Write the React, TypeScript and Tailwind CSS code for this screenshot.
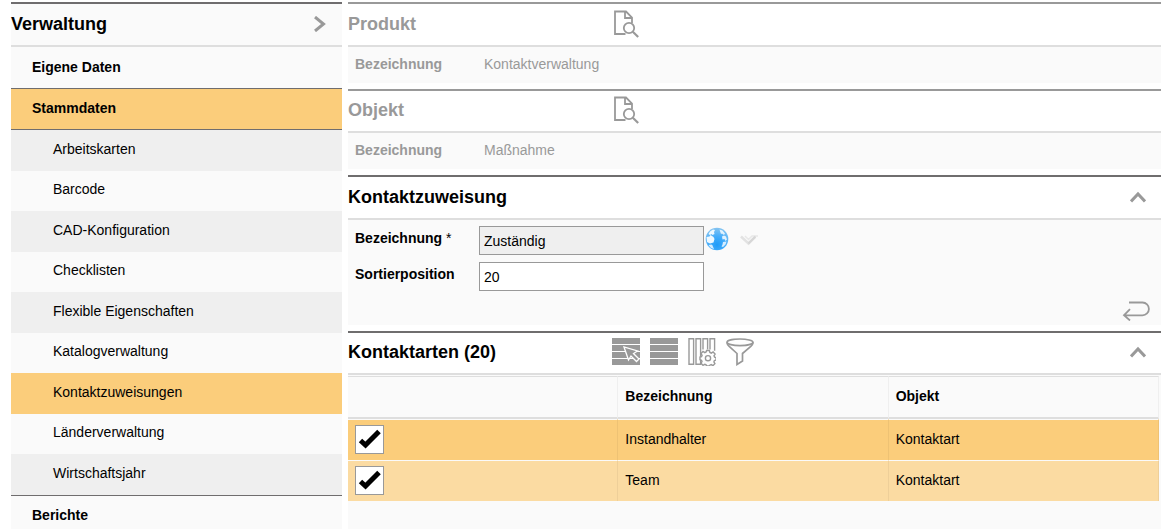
import { useState } from 'react';
import type { ReactNode } from 'react';
import clsx from 'clsx';

const MASTER_DATA = [
  'Arbeitskarten',
  'Barcode',
  'CAD-Konfiguration',
  'Checklisten',
  'Flexible Eigenschaften',
  'Katalogverwaltung',
  'Kontaktzuweisungen',
  'Länderverwaltung',
  'Wirtschaftsjahr',
];

const CONTACT_TYPES = [
  { id: 1, name: 'Instandhalter', object: 'Kontaktart' },
  { id: 2, name: 'Team', object: 'Kontaktart' },
];

function DocumentSearchIcon() {
  return (
    <svg className="size-7" viewBox="0 0 28 28" fill="none" stroke="#999" strokeWidth="1.8">
      <path d="M13.5 24H3V1.5h11l6 6V13M13 1.8V8h6.5" />
      <circle cx="17" cy="18" r="5.2" />
      <path d="M20.8 21.8l5.4 5.2" strokeWidth="2.2" />
    </svg>
  );
}

function SelectRowsIcon() {
  return (
    <svg className="size-7" viewBox="0 0 28 28" fill="#999">
      <path d="M0 0h28v6H0zM0 7h28v6H0zM0 14h28v6H0zM0 21h28v6H0z" />
      <path d="M12 9l4.5 13 2.5-4 5.5 5.5 2.5-2.5-5.5-5.5 4-2.5z" stroke="#fff" strokeWidth="1.3" />
    </svg>
  );
}

function RowsIcon() {
  return (
    <svg className="size-7" viewBox="0 0 28 28" fill="#999">
      <path d="M0 0h28v6H0zM0 7h28v6H0zM0 14h28v6H0zM0 21h28v6H0z" />
    </svg>
  );
}

function ColumnSettingsIcon() {
  return (
    <svg className="size-7" viewBox="0 0 28 28" fill="none" stroke="#999" strokeWidth="1.4">
      <path d="M1 .7h4.6v25.6H1zM8 .7h4.6v25.6H8zM15 11.5V.7h4.6v10.8M22 11.5V.7h4.6v12" />
      <path
        d="M18.6 12.5h2.8l.5 2 1.4.6 1.8-1.1 2 2-1.1 1.8.6 1.4 1.4.3v2.6l-1.6.5-.5 1.3 1 1.8-2 2-1.7-1.1-1.4.6-.4.8h-2.8l-.5-1.1-1.3-.6-1.8 1-2-2 1-1.8-.5-1.3-1.5-.5v-2.6l1.5-.4.6-1.4-1.1-1.8 2-2 1.8 1.1 1.3-.6z"
        fill="#fff"
      />
      <circle cx="20" cy="20.2" r="2.6" />
    </svg>
  );
}

function FilterIcon() {
  return (
    <svg className="size-7" viewBox="0 0 28 28" fill="none" stroke="#999" strokeWidth="1.7">
      <ellipse cx="14" cy="4.3" rx="13" ry="3.3" />
      <path d="M1 4.5c0 1.5 1 2.7 2.2 3.8L11 15.5v11l5.5-3.5v-7.5l8.3-7.2C26 7.2 27 6 27 4.5" />
    </svg>
  );
}

function ChevronUpIcon() {
  return (
    <svg className="h-3 w-4" viewBox="0 0 16 12" fill="none" stroke="#999" strokeWidth="3">
      <path d="M1 10.5L8 3l7 7.5" />
    </svg>
  );
}

function GlobeIcon() {
  return (
    <svg className="size-6" viewBox="0 0 24 24">
      <defs>
        <radialGradient id="globe" cx="50%" cy="75%" r="75%">
          <stop offset="0" stopColor="#1e9bf8" />
          <stop offset="0.5" stopColor="#45adfb" />
          <stop offset="1" stopColor="#86c4f0" />
        </radialGradient>
      </defs>
      <circle cx="12" cy="12" r="11.3" fill="url(#globe)" />
      <g fill="#eef8ff">
        <path d="M5 4.5l3-2 2 .5-1 2 .5 2-2 1-1-1L5 8 3.500 7z" />
        <path d="M1.500 10l3-.5 1-1.500 3 2 1 2-1 3.500-3.500 1L2 15z" />
        <path d="M3.500 18l3-.5 1 1 1.500 3.500-3-1z" opacity=".85" />
        <path d="M14.500 2.500l3 1 2.500 3-1 1.500-2-1.500-1 .5z" opacity=".9" />
        <path d="M17 9.500l2-1 2 1 1 3-1.500 1.500-1-2-2 .5z" opacity=".9" />
        <path d="M18 15l3.500-.5-1 3-2.500 2.500-1.500-.5 1-2z" opacity=".85" />
      </g>
    </svg>
  );
}

function DoubleCheckIcon() {
  return (
    <svg className="h-3 w-5" viewBox="0 0 20 12" fill="none">
      <path d="M2 2.500l7.500 7L16 3" stroke="#e2e2e2" strokeWidth="2.500" />
      <path d="M6 2l3.500 3.500L13 2h6" stroke="#e8e8e8" strokeWidth="1.500" />
      <path d="M9.500 9.500l7-7" stroke="#d6d6d6" strokeWidth="2" />
    </svg>
  );
}

function ReturnIcon() {
  return (
    <svg className="h-5 w-7" viewBox="0 0 28 20" fill="none" stroke="#999" strokeWidth="1.8">
      <path d="M7 1.500h13.500a6.300 6.300 0 0 1 0 12.800H2M8 8.200l-6 6.100 6 5.200" />
    </svg>
  );
}

type PanelProps = {
  title: string;
  muted?: boolean;
  tools?: ReactNode;
  open?: boolean;
  onToggle?: () => void;
  children: ReactNode;
};

function Panel({ title, muted, tools, open = true, onToggle, children }: PanelProps) {
  return (
    <section
      className={clsx(
        'group border-t-2 last:flex-1 last:bg-[#fafafa]',
        muted ? 'border-[#999] text-[#999]' : 'border-[#6f6d6e] text-black'
      )}
    >
      <header className="flex h-[43px] items-center border-b-2 border-[#dedede] bg-white pb-[2px] group-even:h-[42px]">
        <h2 className="w-66 text-lg/5 font-bold">{title}</h2>
        <div className="flex flex-1 gap-[10px]">{tools}</div>
        {onToggle && (
          <button type="button" aria-label={title} aria-expanded={open} onClick={onToggle} className="mr-[15px]">
            <ChevronUpIcon />
          </button>
        )}
      </header>
      {open && children}
    </section>
  );
}

function ReadOnlyPanel({ title, value }: { title: string; value: string }) {
  return (
    <Panel
      title={title}
      muted
      tools={
        <button type="button" aria-label={`${title} suchen`}>
          <DocumentSearchIcon />
        </button>
      }
    >
      <dl className="flex h-9 items-center bg-[#fafafa] pb-[2px] pl-[7px]">
        <dt className="w-[129px] font-bold">Bezeichnung</dt>
        <dd>{value}</dd>
      </dl>
    </Panel>
  );
}

function Sidebar() {
  const [active, setActive] = useState('Kontaktzuweisungen');

  return (
    <nav className="w-[331px] shrink-0 border-t-2 border-[#6f6d6e] bg-[#fafafa]">
      <div className="flex h-[43px] items-center justify-between border-b-2 border-[#dedede] pr-4 pb-[2px]">
        <h2 className="text-lg/5 font-bold">Verwaltung</h2>
        <button type="button" aria-label="Menü einklappen">
          <svg className="h-4 w-3" viewBox="0 0 12 16" fill="none" stroke="#999" strokeWidth="3">
            <path d="M1 1l8.500 7L1 15" />
          </svg>
        </button>
      </div>
      <a href="#eigene-daten" className="flex h-[41px] items-center pb-[2px] pl-[21px] font-bold">
        Eigene Daten
      </a>
      <a
        href="#stammdaten"
        className="flex h-[42px] items-center border-y border-[#6f6d6e] bg-[#fbcd7b] pb-[2px] pl-[21px] font-bold"
      >
        Stammdaten
      </a>
      <ul>
        {MASTER_DATA.map((item) => (
          <li key={item} className="odd:h-[41px] odd:bg-[#efefef] even:h-10">
            <a
              href="#stammdaten"
              onClick={() => setActive(item)}
              className={clsx('flex h-full items-center pb-1 pl-[42px]', item === active && 'bg-[#fbcd7b]')}
            >
              {item}
            </a>
          </li>
        ))}
      </ul>
      <a href="#berichte" className="flex h-[41px] items-center border-t border-[#6f6d6e] pb-[2px] pl-[21px] font-bold">
        Berichte
      </a>
    </nav>
  );
}

function AssignmentForm() {
  return (
    <form className="flex h-[105px] justify-between bg-[#fafafa] pl-[7px]" onSubmit={(e) => e.preventDefault()}>
      <div className="flex flex-col gap-[7px] pt-[6px]">
        <div className="flex items-start">
          <label htmlFor="name" className="w-[124px] pt-[2px] font-bold">
            Bezeichnung <span className="font-normal">*</span>
          </label>
          <input
            id="name"
            readOnly
            defaultValue="Zuständig"
            className="h-[29px] w-[225px] border border-[#999] bg-[#efefef] px-1 outline-none"
          />
          <button type="button" aria-label="Übersetzen" className="ml-px pt-px">
            <GlobeIcon />
          </button>
          <button type="button" aria-label="Übernehmen" className="ml-[10px] pt-2" disabled>
            <DoubleCheckIcon />
          </button>
        </div>
        <div className="flex items-start">
          <label htmlFor="position" className="w-[124px] pt-[2px] font-bold">
            Sortierposition
          </label>
          <input
            id="position"
            defaultValue="20"
            className="h-[29px] w-[225px] border border-[#999] bg-white px-1 outline-none"
          />
        </div>
      </div>
      <button type="submit" aria-label="Zurück" className="mr-[11px] self-end pb-1">
        <ReturnIcon />
      </button>
    </form>
  );
}

function ContactTypeTable() {
  const [selected, setSelected] = useState<number[]>([1, 2]);

  const toggle = (id: number) =>
    setSelected((prev) => (prev.includes(id) ? prev.filter((x) => x !== id) : [...prev, id]));

  return (
    <div className="pt-px pr-[2px]">
      <table className="w-full table-fixed border-separate border-spacing-0 text-left">
        <thead>
          <tr className="h-[43px]">
            <th className="border-t border-r border-b-2 border-[#dedede] border-r-[#efefef]" />
            <th className="border-t border-r border-b-2 border-[#dedede] border-r-[#efefef] px-[7px] pb-[2px]">
              Bezeichnung
            </th>
            <th className="border-t border-r border-b-2 border-[#dedede] border-r-[#efefef] px-[7px] pb-[2px]">
              Objekt
            </th>
          </tr>
        </thead>
        <tbody>
          {CONTACT_TYPES.map((row) => (
            <tr key={row.id} className="h-[41px] odd:bg-[#fbcd7b] even:bg-[#fbdba2]">
              <td className="border-t border-r border-t-[#fafafa] border-r-black/5 pb-[2px] pl-[7px]">
                <label className="grid size-[29px] place-items-center">
                  <input
                    type="checkbox"
                    aria-label={row.name}
                    checked={selected.includes(row.id)}
                    onChange={() => toggle(row.id)}
                    className="peer col-start-1 row-start-1 size-[29px] appearance-none border border-[#999] bg-white"
                  />
                  <svg
                    className="pointer-events-none invisible col-start-1 row-start-1 h-5 w-[23px] peer-checked:visible"
                    viewBox="0 0 23 20"
                    fill="none"
                    stroke="#000"
                    strokeWidth="5"
                  >
                    <path d="M2.500 11.500l5 4.500L21 2.500" />
                  </svg>
                </label>
              </td>
              <td className="border-t border-r border-t-[#fafafa] border-r-black/5 px-[7px] pb-[2px]">{row.name}</td>
              <td className="border-t border-r border-t-[#fafafa] border-r-black/5 px-[7px] pb-[2px]">{row.object}</td>
            </tr>
          ))}
        </tbody>
      </table>
    </div>
  );
}

export default function App() {
  const [formOpen, setFormOpen] = useState(true);
  const [tableOpen, setTableOpen] = useState(true);

  return (
    <div className="flex h-screen gap-[6px] overflow-hidden bg-white pt-[2px] pr-[9px] pl-[11px] font-['Liberation_Sans',Arial,sans-serif] text-sm text-black">
      <Sidebar />
      <main className="flex min-w-0 flex-1 flex-col gap-[6px]">
        <ReadOnlyPanel title="Produkt" value="Kontaktverwaltung" />
        <ReadOnlyPanel title="Objekt" value="Maßnahme" />
        <Panel title="Kontaktzuweisung" open={formOpen} onToggle={() => setFormOpen(!formOpen)}>
          <AssignmentForm />
        </Panel>
        <Panel
          title="Kontaktarten (20)"
          open={tableOpen}
          onToggle={() => setTableOpen(!tableOpen)}
          tools={
            <>
              <button type="button" aria-label="Auswahl">
                <SelectRowsIcon />
              </button>
              <button type="button" aria-label="Alle Zeilen">
                <RowsIcon />
              </button>
              <button type="button" aria-label="Spalten einstellen">
                <ColumnSettingsIcon />
              </button>
              <button type="button" aria-label="Filter">
                <FilterIcon />
              </button>
            </>
          }
        >
          <ContactTypeTable />
        </Panel>
      </main>
    </div>
  );
}
